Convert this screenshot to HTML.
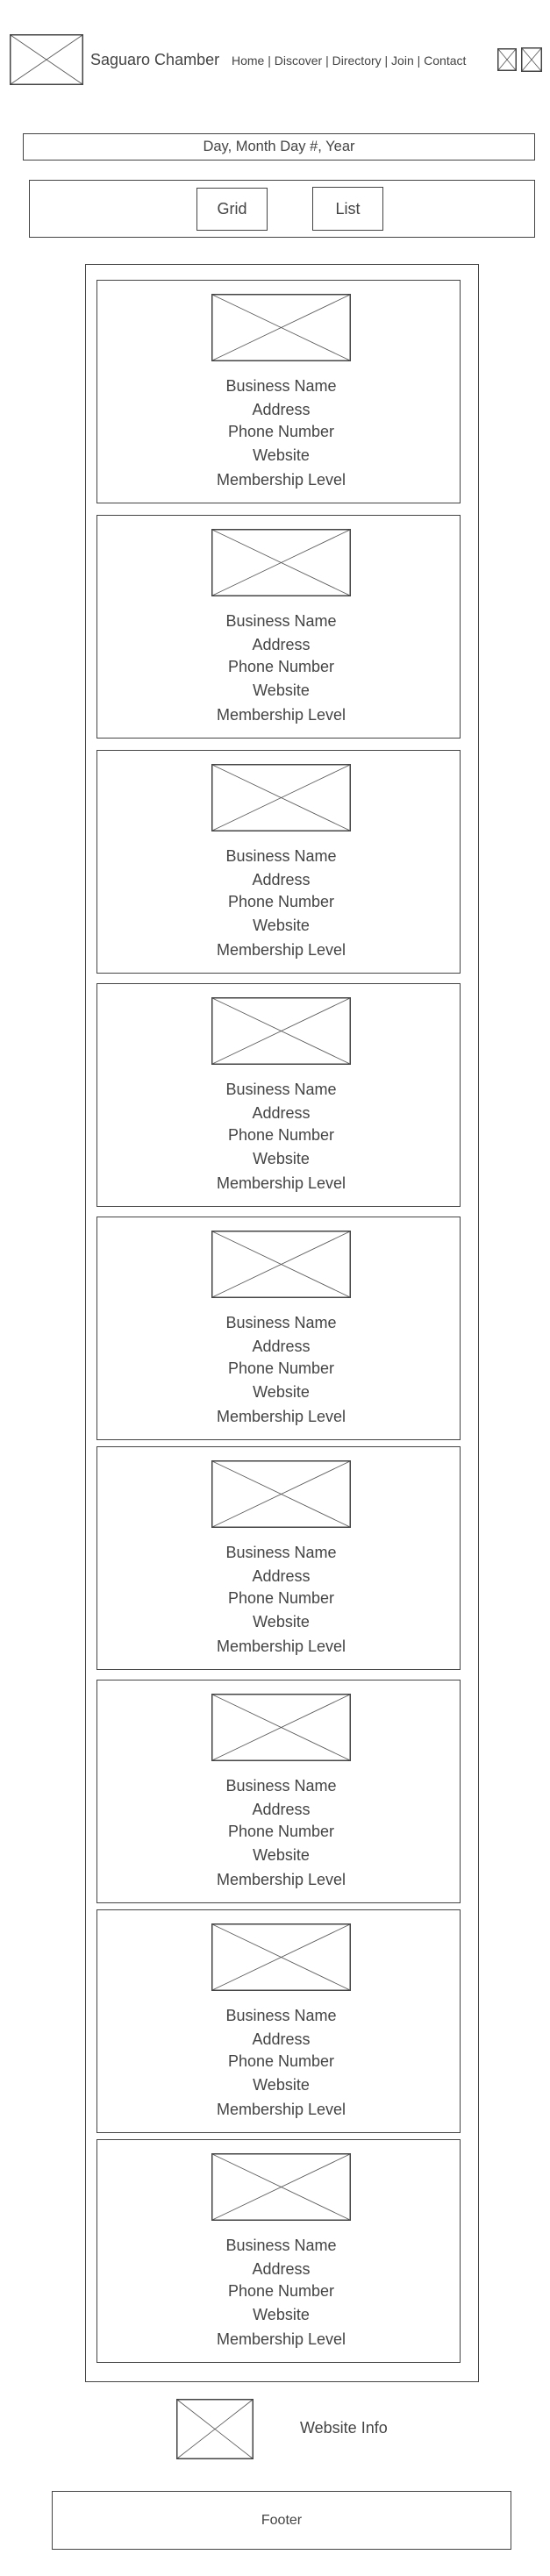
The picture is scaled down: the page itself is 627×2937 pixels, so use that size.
<!DOCTYPE html>
<html><head><meta charset="utf-8">
<style>
*{margin:0;padding:0;box-sizing:border-box}
body{width:627px;height:2937px;background:#fff;position:relative;font-family:"Liberation Sans",Arial,sans-serif;color:#444;overflow:hidden}
.b{position:absolute;border:1.5px solid #444}
svg.x{position:absolute;overflow:visible}
.t{position:absolute;white-space:nowrap;text-align:center;line-height:1}
.card{position:absolute;left:110px;width:415px;height:255px;border:1.5px solid #444}
.card .img{position:absolute;left:130px;top:15px;width:159px;height:77px}
.card .txt{position:absolute;left:3px;width:100%;text-align:center;font-size:18px;line-height:1}
</style></head><body>

<svg class="x" style="left:11px;top:39px" width="84" height="58"><rect x="0.75" y="0.75" width="82.5" height="56.5" fill="none" stroke="#444" stroke-width="1.5"/><path d="M1 1L83 57M83 1L1 57" stroke="#555" stroke-width="0.8"/></svg>
<div class="t" style="left:103px;top:59px;font-size:18px">Saguaro Chamber</div>
<div class="t" style="left:264px;top:62px;font-size:14px">Home | Discover | Directory | Join | Contact</div>
<svg class="x" style="left:567px;top:55px" width="22" height="26"><rect x="0.75" y="0.75" width="20.5" height="24.5" fill="none" stroke="#444" stroke-width="1.5"/><path d="M1 1L21 25M21 1L1 25" stroke="#555" stroke-width="0.8"/></svg>
<svg class="x" style="left:594px;top:54px" width="24" height="28"><rect x="0.75" y="0.75" width="22.5" height="26.5" fill="none" stroke="#444" stroke-width="1.5"/><path d="M1 1L23 27M23 1L1 27" stroke="#555" stroke-width="0.8"/></svg>

<div class="b" style="left:26px;top:152px;width:584px;height:31px"></div>
<div class="t" style="left:26px;width:584px;top:159px;font-size:16.5px">Day, Month Day #, Year</div>

<div class="b" style="left:33px;top:205px;width:577px;height:66px"></div>
<div class="b" style="left:224px;top:214px;width:81px;height:49px"></div>
<div class="t" style="left:224px;width:81px;top:229px;font-size:18px">Grid</div>
<div class="b" style="left:356px;top:213px;width:81px;height:50px"></div>
<div class="t" style="left:356px;width:81px;top:229px;font-size:18px">List</div>

<div class="b" style="left:97px;top:301px;width:449px;height:2415px"></div>

<svg class="x" style="left:201px;top:2735px" width="88" height="69"><rect x="0.75" y="0.75" width="86.5" height="67.5" fill="none" stroke="#444" stroke-width="1.5"/><path d="M1 1L87 68M87 1L1 68" stroke="#555" stroke-width="0.8"/></svg>
<div class="t" style="left:342px;top:2759px;font-size:18px">Website Info</div>

<div class="b" style="left:59px;top:2840px;width:524px;height:67px"></div>
<div class="t" style="left:59px;width:524px;top:2866px;font-size:16px">Footer</div>

<div class="card" style="top:319px"><svg class="x img" width="159" height="77"><rect x="0.75" y="0.75" width="157.5" height="75.5" fill="none" stroke="#444" stroke-width="1.5"/><path d="M1 1L158 76M158 1L1 76" stroke="#555" stroke-width="0.8"/></svg><div class="txt" style="top:111px">Business Name</div><div class="txt" style="top:138px">Address</div><div class="txt" style="top:163px">Phone Number</div><div class="txt" style="top:190px">Website</div><div class="txt" style="top:218px">Membership Level</div></div>
<div class="card" style="top:587px"><svg class="x img" width="159" height="77"><rect x="0.75" y="0.75" width="157.5" height="75.5" fill="none" stroke="#444" stroke-width="1.5"/><path d="M1 1L158 76M158 1L1 76" stroke="#555" stroke-width="0.8"/></svg><div class="txt" style="top:111px">Business Name</div><div class="txt" style="top:138px">Address</div><div class="txt" style="top:163px">Phone Number</div><div class="txt" style="top:190px">Website</div><div class="txt" style="top:218px">Membership Level</div></div>
<div class="card" style="top:855px"><svg class="x img" width="159" height="77"><rect x="0.75" y="0.75" width="157.5" height="75.5" fill="none" stroke="#444" stroke-width="1.5"/><path d="M1 1L158 76M158 1L1 76" stroke="#555" stroke-width="0.8"/></svg><div class="txt" style="top:111px">Business Name</div><div class="txt" style="top:138px">Address</div><div class="txt" style="top:163px">Phone Number</div><div class="txt" style="top:190px">Website</div><div class="txt" style="top:218px">Membership Level</div></div>
<div class="card" style="top:1121px"><svg class="x img" width="159" height="77"><rect x="0.75" y="0.75" width="157.5" height="75.5" fill="none" stroke="#444" stroke-width="1.5"/><path d="M1 1L158 76M158 1L1 76" stroke="#555" stroke-width="0.8"/></svg><div class="txt" style="top:111px">Business Name</div><div class="txt" style="top:138px">Address</div><div class="txt" style="top:163px">Phone Number</div><div class="txt" style="top:190px">Website</div><div class="txt" style="top:218px">Membership Level</div></div>
<div class="card" style="top:1387px"><svg class="x img" width="159" height="77"><rect x="0.75" y="0.75" width="157.5" height="75.5" fill="none" stroke="#444" stroke-width="1.5"/><path d="M1 1L158 76M158 1L1 76" stroke="#555" stroke-width="0.8"/></svg><div class="txt" style="top:111px">Business Name</div><div class="txt" style="top:138px">Address</div><div class="txt" style="top:163px">Phone Number</div><div class="txt" style="top:190px">Website</div><div class="txt" style="top:218px">Membership Level</div></div>
<div class="card" style="top:1649px"><svg class="x img" width="159" height="77"><rect x="0.75" y="0.75" width="157.5" height="75.5" fill="none" stroke="#444" stroke-width="1.5"/><path d="M1 1L158 76M158 1L1 76" stroke="#555" stroke-width="0.8"/></svg><div class="txt" style="top:111px">Business Name</div><div class="txt" style="top:138px">Address</div><div class="txt" style="top:163px">Phone Number</div><div class="txt" style="top:190px">Website</div><div class="txt" style="top:218px">Membership Level</div></div>
<div class="card" style="top:1915px"><svg class="x img" width="159" height="77"><rect x="0.75" y="0.75" width="157.5" height="75.5" fill="none" stroke="#444" stroke-width="1.5"/><path d="M1 1L158 76M158 1L1 76" stroke="#555" stroke-width="0.8"/></svg><div class="txt" style="top:111px">Business Name</div><div class="txt" style="top:138px">Address</div><div class="txt" style="top:163px">Phone Number</div><div class="txt" style="top:190px">Website</div><div class="txt" style="top:218px">Membership Level</div></div>
<div class="card" style="top:2177px"><svg class="x img" width="159" height="77"><rect x="0.75" y="0.75" width="157.5" height="75.5" fill="none" stroke="#444" stroke-width="1.5"/><path d="M1 1L158 76M158 1L1 76" stroke="#555" stroke-width="0.8"/></svg><div class="txt" style="top:111px">Business Name</div><div class="txt" style="top:138px">Address</div><div class="txt" style="top:163px">Phone Number</div><div class="txt" style="top:190px">Website</div><div class="txt" style="top:218px">Membership Level</div></div>
<div class="card" style="top:2439px"><svg class="x img" width="159" height="77"><rect x="0.75" y="0.75" width="157.5" height="75.5" fill="none" stroke="#444" stroke-width="1.5"/><path d="M1 1L158 76M158 1L1 76" stroke="#555" stroke-width="0.8"/></svg><div class="txt" style="top:111px">Business Name</div><div class="txt" style="top:138px">Address</div><div class="txt" style="top:163px">Phone Number</div><div class="txt" style="top:190px">Website</div><div class="txt" style="top:218px">Membership Level</div></div>

</body></html>
